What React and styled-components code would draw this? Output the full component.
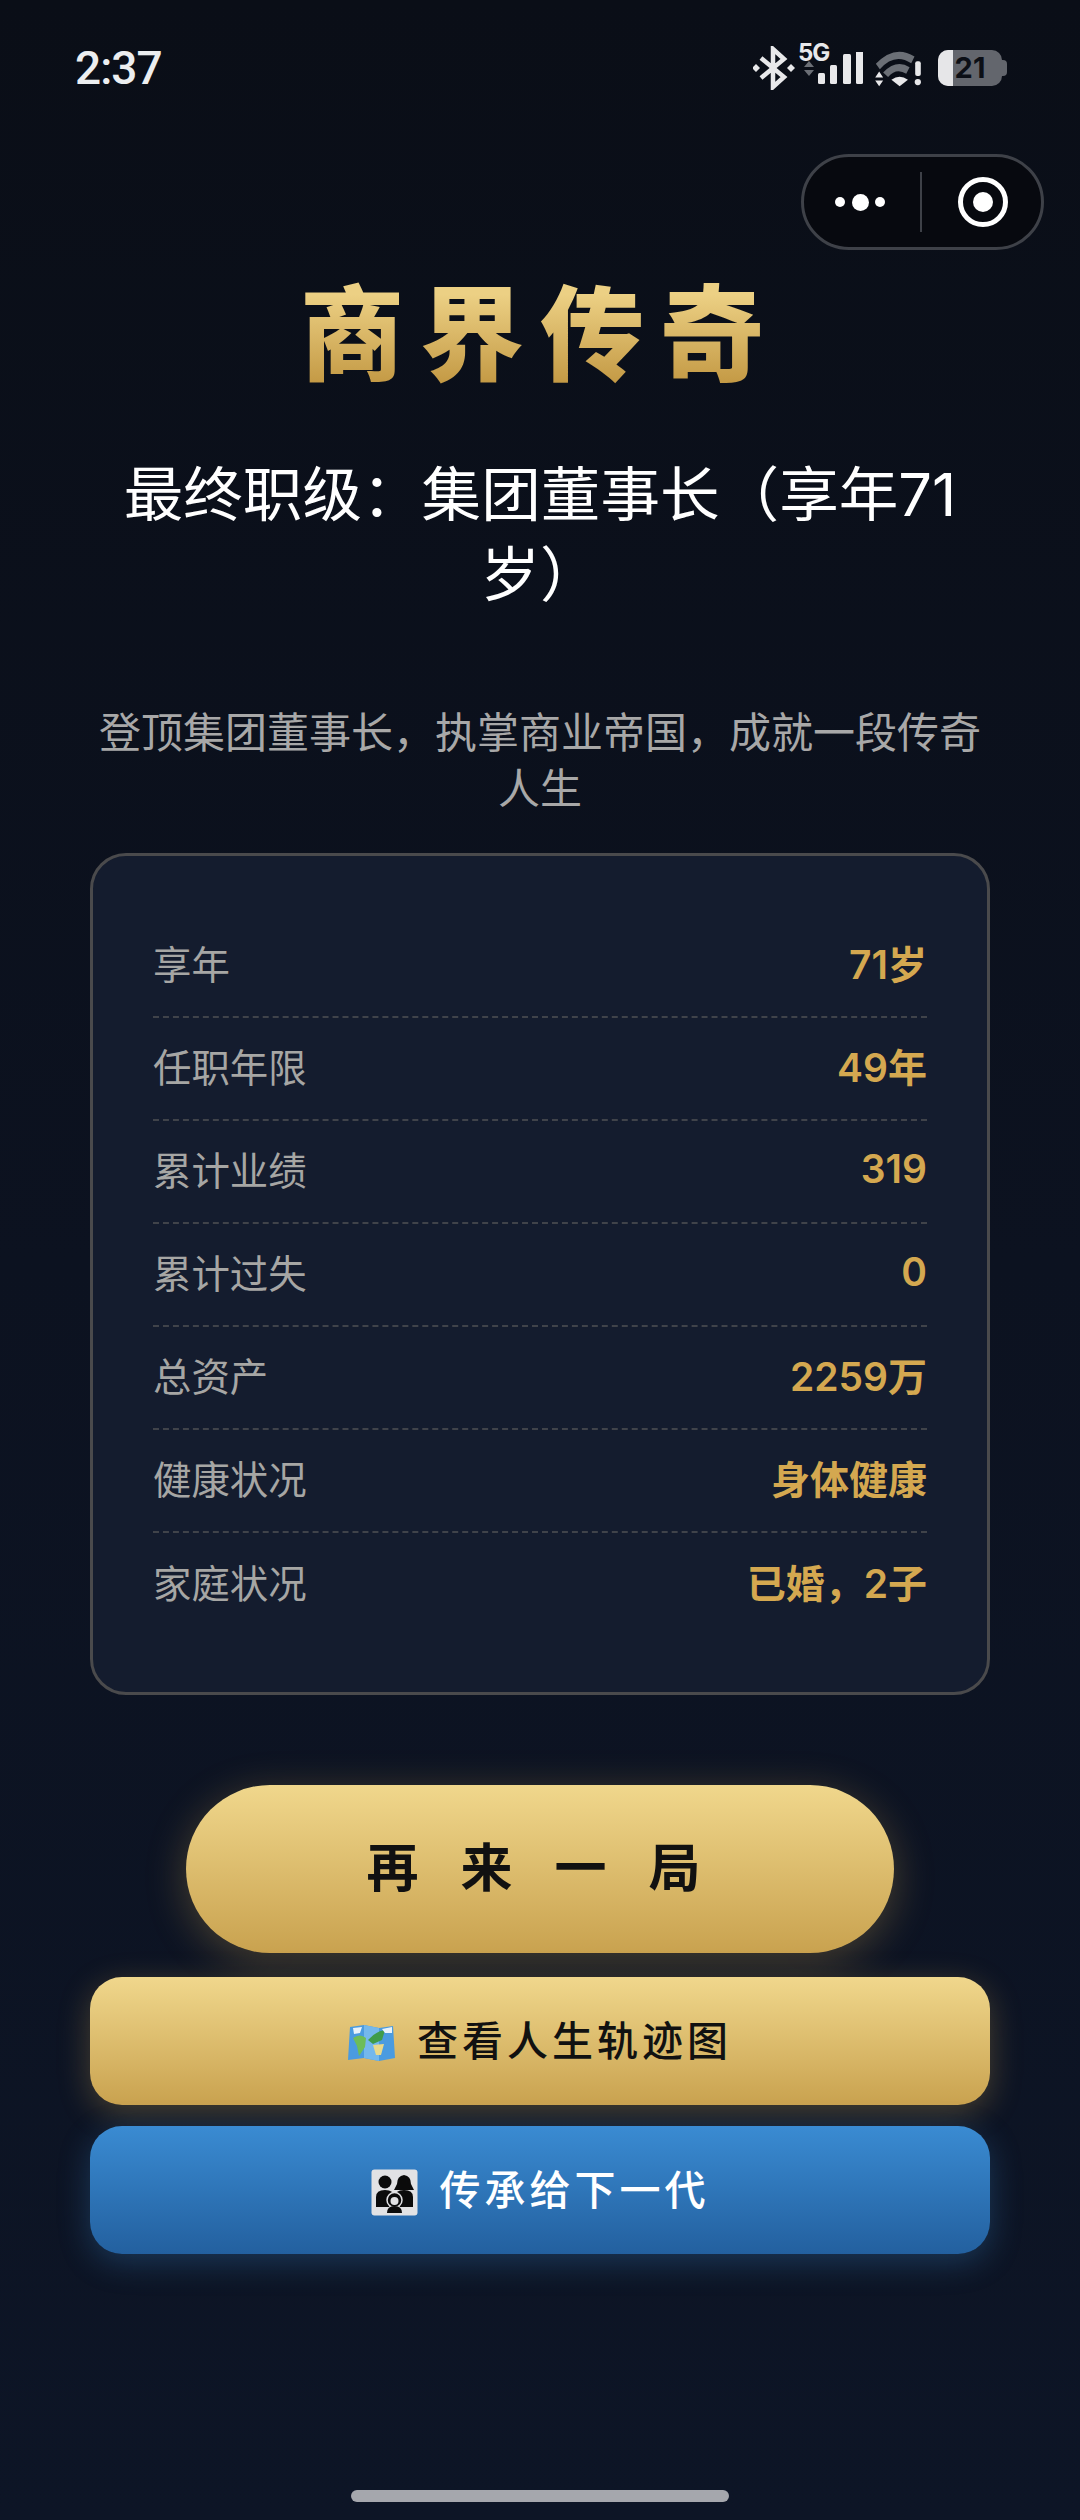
import styled, { createGlobalStyle } from "styled-components";

const GlobalStyle = createGlobalStyle`
  html, body {
    margin: 0;
    padding: 0;
    background: #0a0e17;
  }
  * {
    box-sizing: border-box;
  }
`;

const FONT = `Inter, "Noto Sans CJK SC", sans-serif`;

const stats = [
  ["享年", "71岁"],
  ["任职年限", "49年"],
  ["累计业绩", "319"],
  ["累计过失", "0"],
  ["总资产", "2259万"],
  ["健康状况", "身体健康"],
  ["家庭状况", "已婚，2子"],
];

function StatusIcons() {
  return (
    <Icons>
      <svg width="42" height="44" viewBox="0 0 42 44">
        <path d="M8 12 L31 31 L20 41 V3 L31 13 L8 32" fill="none" stroke="#e8e8ea" strokeWidth="4.5" />
        <path d="M3 18 l4 4 -4 4 -4 -4z M38 18 l4 4 -4 4 -4 -4z" fill="#e8e8ea" />
      </svg>
      <SignalWrap>
        <FiveG>5G</FiveG>
        <svg width="64" height="38" viewBox="0 0 64 38">
          <path d="M7 9 l5 6 H2z M7 24 l5 -6 H2z" fill="#6b6f76" />
          <rect x="16" y="21" width="7" height="11" rx="1.5" fill="#e8e8ea" />
          <rect x="28" y="13" width="7" height="19" rx="1.5" fill="#e8e8ea" />
          <rect x="41" y="2" width="8" height="30" rx="1.5" fill="#e8e8ea" />
          <rect x="54" y="-6" width="7" height="38" rx="1.5" fill="#e8e8ea" />
        </svg>
      </SignalWrap>
      <svg width="50" height="39" viewBox="460 85 150 118">
        <path d="M468 130 Q525 70 585 108 L575 128 Q525 95 480 146z" fill="#6b6f76" />
        <path d="M490 156 Q530 115 570 140 L560 160 Q530 140 505 170z" fill="#6b6f76" />
        <path d="M515 178 Q540 160 565 178 L540 198z" fill="#e8e8ea" />
        <path d="M478 153 l12 18 H466z M478 198 l12 -18 H466z" fill="#e8e8ea" />
        <rect x="587" y="122" width="17" height="45" rx="6" fill="#e8e8ea" />
        <circle cx="595" cy="185" r="9.5" fill="#e8e8ea" />
      </svg>
      <Battery>
        <BatteryLevel />
        <BatteryText>21</BatteryText>
        <BatteryTip />
      </Battery>
    </Icons>
  );
}

function MapIcon() {
  return (
    <svg width="47" height="36" viewBox="0 0 47 36">
      <path d="M2 2 L16 0 L31 3 L45 1 L47 33 L31 36 L16 33 L0 35z" fill="#4a9be0" />
      <path d="M16 0 L31 3 L31 36 L16 33z" fill="#74b8ec" />
      <path d="M5 13 Q12 8 18 13 L17 22 L11 31 L9 21z" fill="#6dbd58" />
      <path d="M20 15 Q28 6 37 5 L34 15 L25 19z" fill="#3f9c4a" />
      <path d="M25 20 L36 19 L33 30 L28 30z" fill="#e9d98a" />
      <path d="M5 3 L14 2 L12 8 L6 9z M34 4 L44 2 L44 8 L37 8z" fill="#e8f2fa" />
    </svg>
  );
}

function FamilyIcon() {
  return (
    <svg width="47" height="47" viewBox="0 0 47 47">
      <rect x="0.5" y="0.5" width="46" height="46" rx="3" fill="#e2e2e4" />
      <circle cx="14" cy="13" r="6.5" fill="#0b0b0b" />
      <path d="M33 6 q7 1 7 9 l3 6 h-20 l3 -6 q0 -8 7 -9z" fill="#0b0b0b" />
      <path d="M5 38 V28 q0 -7 9 -7 q9 0 9 7 l-5 10z" fill="#0b0b0b" />
      <path d="M42 38 V28 q0 -7 -9 -7 q-9 0 -9 7 l5 10z" fill="#0b0b0b" />
      <circle cx="23.5" cy="31" r="7.5" fill="#0b0b0b" stroke="#e2e2e4" strokeWidth="1.5" />
      <circle cx="23.5" cy="32" r="4" fill="#e2e2e4" />
      <path d="M16 44 q0 -7 7.5 -7 q7.5 0 7.5 7z" fill="#0b0b0b" />
    </svg>
  );
}

export default function App() {
  return (
    <Page>
      <GlobalStyle />
      <StatusBar>
        <Time>2:37</Time>
        <StatusIcons />
      </StatusBar>
      <CapsuleRow>
        <Capsule>
          <Dots>
            <i />
            <b />
            <i />
          </Dots>
          <CapsuleDivider />
          <Target />
        </Capsule>
      </CapsuleRow>
      <Title>商界传奇</Title>
      <Rank>最终职级：集团董事长（享年71岁）</Rank>
      <Summary>登顶集团董事长，执掌商业帝国，成就一段传奇人生</Summary>
      <Card>
        {stats.map(([label, value]) => (
          <Row key={label}>
            <Label>{label}</Label>
            <Value>{value}</Value>
          </Row>
        ))}
      </Card>
      <RestartButton>再来一局</RestartButton>
      <ActionButton $variant="gold">
        <MapIcon />
        查看人生轨迹图
      </ActionButton>
      <ActionButton $variant="blue">
        <FamilyIcon />
        传承给下一代
      </ActionButton>
      <HomeBar />
    </Page>
  );
}

const Page = styled.div`
  width: 1080px;
  height: 2520px;
  overflow: hidden;
  display: flex;
  flex-direction: column;
  align-items: center;
  padding: 0 90px;
  background: linear-gradient(180deg, #0a0e17 0%, #0c1220 50%, #0d1526 100%);
  font-family: ${FONT};
  color: #fff;
`;

const StatusBar = styled.div`
  width: 1080px;
  height: 136px;
  flex: none;
  display: flex;
  align-items: flex-start;
  justify-content: space-between;
  padding: 40px 78px 0 75px;
`;

const Time = styled.div`
  font-family: Roboto, sans-serif;
  font-size: 46px;
  line-height: 56px;
  font-weight: 500;
  letter-spacing: -1px;
  color: #eceef0;
`;

const Icons = styled.div`
  display: flex;
  align-items: center;
  gap: 7px;
  height: 56px;
`;

const SignalWrap = styled.div`
  position: relative;
  width: 64px;
  height: 44px;
  display: flex;
  align-items: flex-end;
`;

const FiveG = styled.span`
  position: absolute;
  left: -4px;
  top: -5px;
  font-size: 24px;
  line-height: 24px;
  font-weight: 700;
  letter-spacing: -1px;
  color: #e8e8ea;
`;

const Battery = styled.div`
  position: relative;
  width: 64px;
  height: 36px;
  margin-left: 8px;
  border-radius: 10px;
  background: #63666d;
  display: flex;
  align-items: center;
  justify-content: center;
`;

const BatteryLevel = styled.div`
  position: absolute;
  left: 0;
  top: 0;
  bottom: 0;
  width: 15px;
  border-radius: 10px 0 0 10px;
  background: #e6e6e8;
`;

const BatteryText = styled.span`
  position: relative;
  font-size: 29px;
  line-height: 36px;
  font-weight: 700;
  color: #0c0f16;
`;

const BatteryTip = styled.div`
  position: absolute;
  right: -5px;
  top: 10px;
  width: 5px;
  height: 16px;
  border-radius: 0 4px 4px 0;
  background: #63666d;
`;

const CapsuleRow = styled.div`
  width: 1080px;
  flex: none;
  display: flex;
  justify-content: flex-end;
  padding: 18px 36px 0 0;
`;

const Capsule = styled.div`
  width: 243px;
  height: 96px;
  display: flex;
  align-items: center;
  padding-left: 31px;
  border: 3px solid #3e4148;
  border-radius: 48px;
  background: #07090f;
`;

const Dots = styled.div`
  width: 50px;
  display: flex;
  align-items: center;
  justify-content: space-between;

  i {
    width: 10px;
    height: 10px;
    border-radius: 50%;
    background: #fff;
  }

  b {
    width: 17px;
    height: 17px;
    border-radius: 50%;
    background: #fff;
  }
`;

const CapsuleDivider = styled.div`
  width: 2px;
  height: 60px;
  margin-left: 35px;
  background: #3e4148;
`;

const Target = styled.div`
  position: relative;
  width: 50px;
  height: 50px;
  margin-left: 36px;
  border: 5px solid #fff;
  border-radius: 50%;

  &::after {
    content: "";
    position: absolute;
    inset: 10px;
    border-radius: 50%;
    background: #fff;
  }
`;

const Title = styled.h1`
  margin: 17px 0 0;
  font-size: 104px;
  line-height: 136px;
  font-weight: 900;
  letter-spacing: 16px;
  background: linear-gradient(180deg, #ecd084 20%, #c49a45 85%);
  -webkit-background-clip: text;
  background-clip: text;
  color: transparent;
`;

const Rank = styled.h2`
  width: 900px;
  margin: 51px 0 0;
  font-size: 59.6px;
  line-height: 80px;
  font-weight: 400;
  text-align: center;
  color: #fff;
`;

const Summary = styled.p`
  width: 900px;
  margin: 91px 0 0;
  font-size: 42px;
  line-height: 56px;
  text-align: center;
  color: #a8a8a8;
`;

const Card = styled.div`
  width: 900px;
  height: 842px;
  margin-top: 36px;
  padding: 59px 60px;
  flex: none;
  border: 3px solid #4a4a4c;
  border-radius: 36px;
  background: #141c2e;
`;

const Row = styled.div`
  height: 103px;
  padding-bottom: 7px;
  display: flex;
  align-items: center;
  justify-content: space-between;
  border-bottom: 2px dashed #40434a;

  &:last-child {
    border-bottom: none;
  }
`;

const Label = styled.span`
  font-size: 38.4px;
  color: #a6a6a4;
`;

const Value = styled.span`
  font-size: 39px;
  font-weight: 600;
  color: #d4a850;
`;

const RestartButton = styled.button`
  width: 708px;
  height: 168px;
  margin-top: 90px;
  padding: 0 0 10px 29px;
  flex: none;
  border: none;
  border-radius: 84px;
  background: linear-gradient(180deg, #f0d78c 0%, #c9a24f 100%);
  box-shadow: 0 8px 40px rgba(212, 168, 80, 0.3);
  font-family: ${FONT};
  font-size: 52px;
  font-weight: 700;
  letter-spacing: 42px;
  color: #111;
`;

const variants = {
  gold: `
    margin-top: 24px;
    background: linear-gradient(180deg, #f0d78c 0%, #c9a24f 100%);
    box-shadow: 0 8px 32px rgba(212, 168, 80, 0.3);
    color: #111;
  `,
  blue: `
    margin-top: 21px;
    background: linear-gradient(180deg, #3a8bd2 0%, #23609f 100%);
    box-shadow: 0 8px 32px rgba(58, 139, 210, 0.3);
    color: #fff;
  `,
};

const ActionButton = styled.button`
  width: 900px;
  height: 128px;
  padding: 0 0 6px;
  flex: none;
  display: flex;
  align-items: center;
  justify-content: center;
  gap: 22px;
  border: none;
  border-radius: 32px;
  font-family: ${FONT};
  font-size: 41px;
  font-weight: 500;
  letter-spacing: 4px;
  ${(p) => variants[p.$variant]}

  svg {
    margin-top: 10px;
  }
`;

const HomeBar = styled.div`
  width: 378px;
  height: 12px;
  margin-top: auto;
  margin-bottom: 18px;
  flex: none;
  border-radius: 6px;
  background: #a5a7ad;
`;
